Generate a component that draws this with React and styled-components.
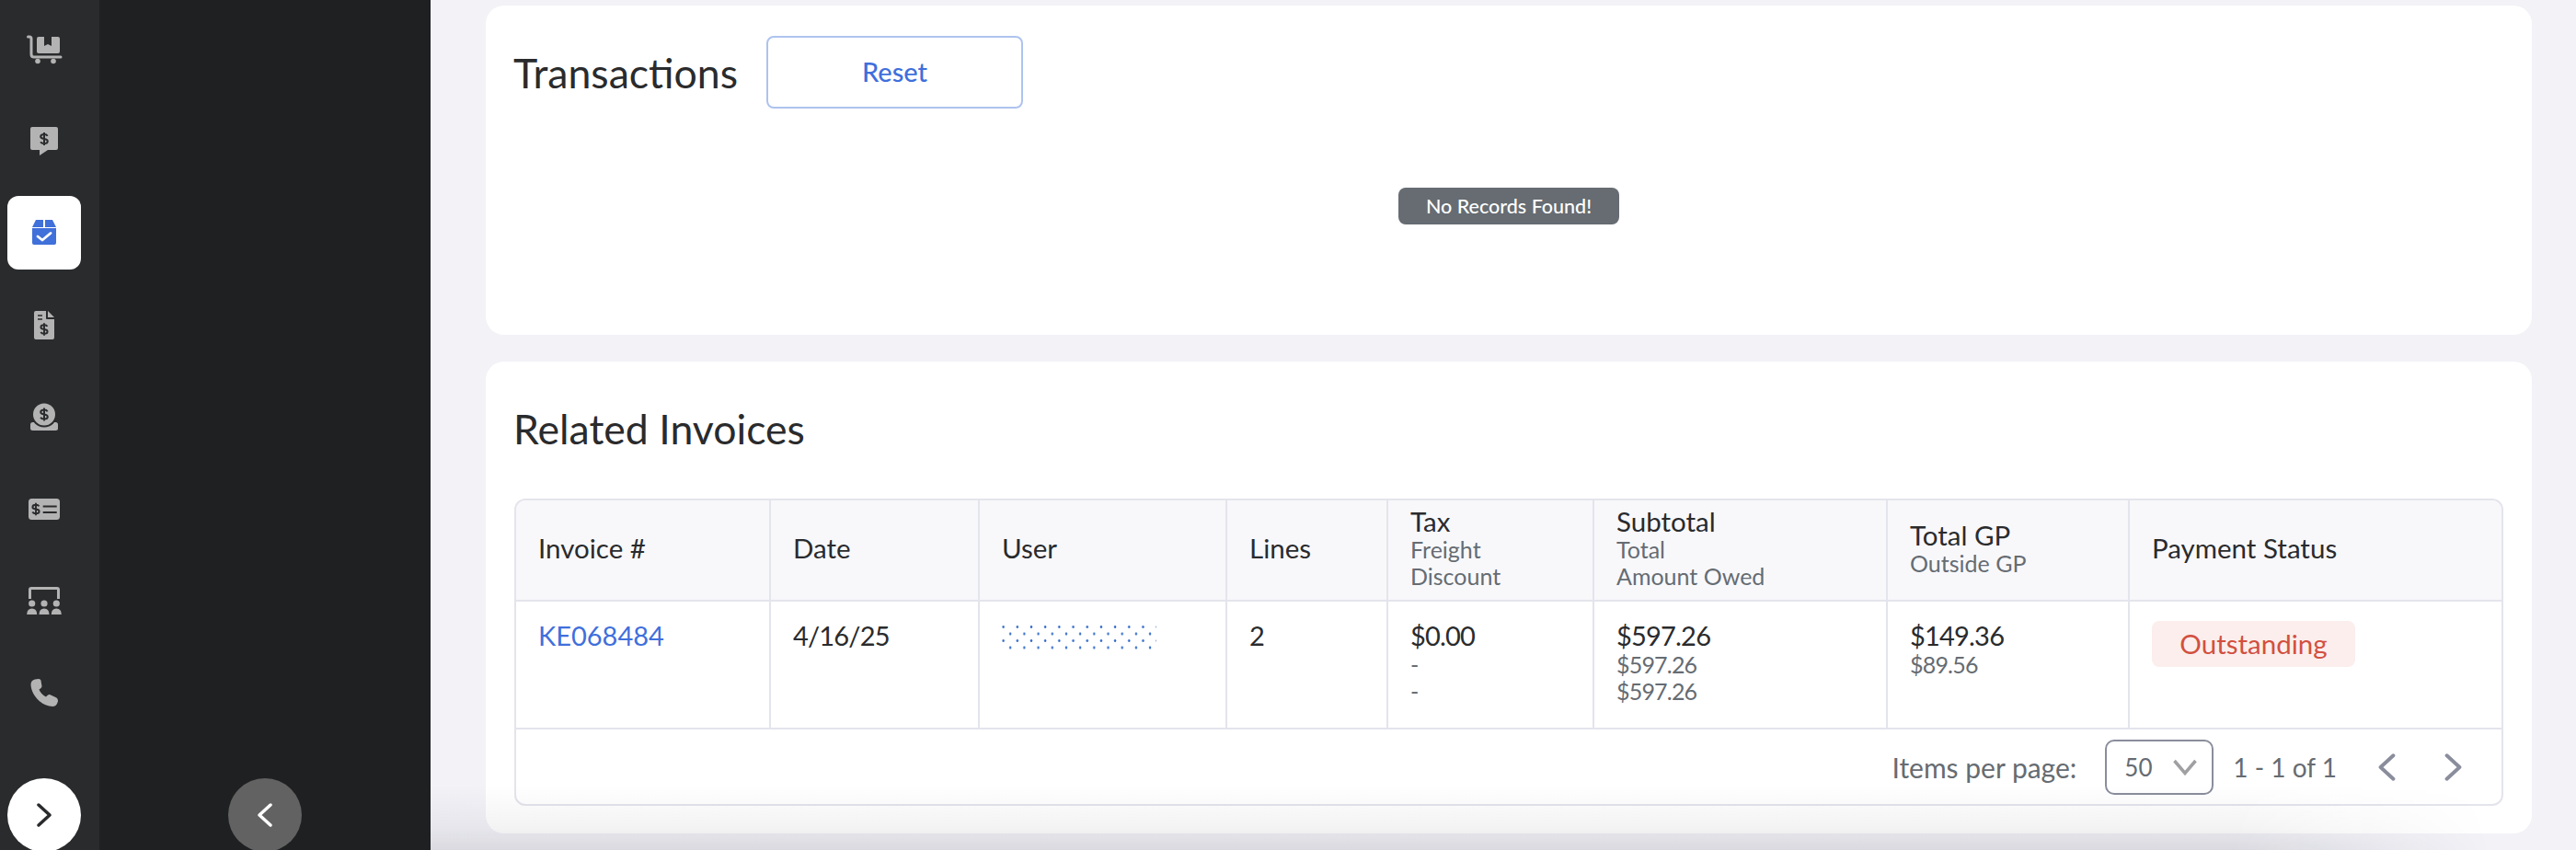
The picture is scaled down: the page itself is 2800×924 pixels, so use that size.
import React from 'react'
import styled, { createGlobalStyle } from 'styled-components'

const GlobalStyle = createGlobalStyle`
  html, body {
    margin: 0;
    height: 100%;
    overflow: hidden;
    background: #f2f2f7;
  }
  * {
    box-sizing: border-box;
  }
  body {
    font-family: 'Lato', 'Noto Sans', sans-serif;
    color: #2a2b2d;
  }
`

const GREY = '#b3b3b3'
const DARK = '#2a2b2d'

const Dollar = ({ x, y, s = 1, color = DARK }) => (
  <g transform={`translate(${x} ${y}) scale(${s})`} fill="none" stroke={color} strokeWidth="2">
    <path d="M3.6 -3.2C3 -4.5 1.8 -5 0 -5C-2.2 -5 -3.8 -4 -3.8 -2.4C-3.8 -0.8 -2.4 -0.3 0 0C2.4 0.3 3.8 0.9 3.8 2.5C3.8 4.1 2.2 5 0 5C-1.8 5 -3.2 4.4 -3.9 3.2M0 -7V7" />
  </g>
)

const Svg40 = ({ children }) => (
  <svg width="40" height="40" viewBox="0 0 40 40" fill={GREY}>
    {children}
  </svg>
)

const CartIcon = () => (
  <Svg40>
    <path d="M2.5 7H4Q6 7 6 9V26Q6 29 9 29H38" fill="none" stroke={GREY} strokeWidth="3" strokeLinecap="round" />
    <circle cx="13" cy="33.5" r="2.8" />
    <circle cx="30" cy="33.5" r="2.8" />
    <path d="M14 7H20V17L24 15L28 17V7H35Q37 7 37 9V23Q37 25 35 25H14Q12 25 12 23V9Q12 7 14 7Z" />
  </Svg40>
)

const QuoteIcon = () => (
  <Svg40>
    <path d="M7 5H33Q35 5 35 7V28Q35 30 33 30H24L15 36V30H7Q5 30 5 28V7Q5 5 7 5Z" />
    <Dollar x={20} y={18} />
  </Svg40>
)

const OrderIcon = () => (
  <svg width="40" height="40" viewBox="0 0 40 40" fill="#4070d9">
    <path d="M11 6H19V14H7Z" />
    <path d="M21 6H29L33 14H21Z" />
    <path d="M7 15H33V31Q33 33 31 33H9Q7 33 7 31Z" />
    <path d="M13 24L18 28L27 20.5" fill="none" stroke="#fff" strokeWidth="2.8" strokeLinecap="round" strokeLinejoin="round" />
  </svg>
)

const InvoiceIcon = () => (
  <Svg40>
    <path d="M11 5H22V13Q22 14 23 14H31V34Q31 36 29 36H11Q9 36 9 34V7Q9 5 11 5Z" />
    <path d="M24 5L31 12H24Z" />
    <path d="M13 10H18M13 14H18" stroke={DARK} strokeWidth="1.6" />
    <Dollar x={20} y={25} s={0.95} />
  </Svg40>
)

const CoinIcon = () => (
  <Svg40>
    <rect x="5" y="26" width="30" height="9" rx="2.5" />
    <circle cx="20" cy="17.5" r="14" fill={DARK} />
    <circle cx="20" cy="17.5" r="12" />
    <Dollar x={20} y={17.5} />
  </Svg40>
)

const CardIcon = () => (
  <Svg40>
    <rect x="3" y="9" width="34" height="23" rx="3.5" />
    <Dollar x={11} y={20.5} s={0.95} />
    <path d="M18.7 17.5H33.7M18.7 24H33.7" stroke={DARK} strokeWidth="2" />
  </Svg40>
)

const ClassIcon = () => (
  <Svg40>
    <path d="M4.5 18V8Q4.5 6.5 6 6.5H34Q35.5 6.5 35.5 8V18" fill="none" stroke={GREY} strokeWidth="3" />
    {[6.7, 20, 33.3].map(cx => (
      <g key={cx}>
        <circle cx={cx} cy="23" r="3.6" />
        <path d={`M${cx - 5.5} 35Q${cx - 5.5} 28.5 ${cx} 28.5Q${cx + 5.5} 28.5 ${cx + 5.5} 35Z`} />
      </g>
    ))}
  </Svg40>
)

const PhoneIcon = () => (
  <Svg40>
    <g transform="translate(5 5)">
      <path d="M5 0.5L9 0C10.5 0 11.5 1 11.5 2L12.5 8C12.5 9.5 11 10.5 9.5 11.5C10.5 14.5 13.5 18 17 19.5C18.5 18 19.5 16.8 21 17L27.5 20C29.5 21 30 22.5 30 24C29.5 27 27.5 30 24.5 30C11 30 0.5 16 0.5 6C0.5 3 2.5 1 5 0.5Z" />
    </g>
  </Svg40>
)

const Chevron = ({ dir, color, width = 16, height = 26, stroke = 3.5 }) => (
  <svg width={width} height={height} viewBox="0 0 16 26" fill="none" stroke={color} strokeWidth={stroke} strokeLinecap="round" strokeLinejoin="round">
    <path d={dir === 'left' ? 'M14 2L2 13L14 24' : 'M2 2L14 13L2 24'} />
  </svg>
)

const navItems = [
  { icon: <CartIcon /> },
  { icon: <QuoteIcon /> },
  { icon: <OrderIcon />, active: true },
  { icon: <InvoiceIcon /> },
  { icon: <CoinIcon /> },
  { icon: <CardIcon /> },
  { icon: <ClassIcon /> },
  { icon: <PhoneIcon /> },
]

const columns = [277, 227, 269, 175, 224, 319, 263, 404]

export default function App() {
  return (
    <Page>
      <GlobalStyle />
      <Rail>
        {navItems.map((item, i) => (
          <NavCell key={i}>
            <NavButton $active={item.active}>{item.icon}</NavButton>
          </NavCell>
        ))}
        <RoundButton $light>
          <Chevron dir="right" color={DARK} />
        </RoundButton>
      </Rail>
      <Panel>
        <RoundButton>
          <Chevron dir="left" color="#fff" />
        </RoundButton>
      </Panel>
      <Main>
        <TransactionsCard>
          <CardHeader>
            <Title>Transactions</Title>
            <ResetButton>Reset</ResetButton>
          </CardHeader>
          <EmptyRow>
            <EmptyPill>No Records Found!</EmptyPill>
          </EmptyRow>
        </TransactionsCard>
        <InvoicesCard>
          <InvoicesTitle>Related Invoices</InvoicesTitle>
          <TableFrame>
            <Table>
              <colgroup>
                {columns.map((w, i) => (
                  <col key={i} style={{ width: w }} />
                ))}
              </colgroup>
              <thead>
                <tr>
                  <HeadCell>Invoice #</HeadCell>
                  <HeadCell>Date</HeadCell>
                  <HeadCell>User</HeadCell>
                  <HeadCell>Lines</HeadCell>
                  <HeadCell>
                    Tax
                    <SubLine>Freight</SubLine>
                    <SubLine>Discount</SubLine>
                  </HeadCell>
                  <HeadCell>
                    Subtotal
                    <SubLine>Total</SubLine>
                    <SubLine>Amount Owed</SubLine>
                  </HeadCell>
                  <HeadCell>
                    Total GP
                    <SubLine>Outside GP</SubLine>
                  </HeadCell>
                  <HeadCell>Payment Status</HeadCell>
                </tr>
              </thead>
              <tbody>
                <tr>
                  <BodyCell>
                    <InvoiceLink>KE068484</InvoiceLink>
                  </BodyCell>
                  <BodyCell $numeric>4/16/25</BodyCell>
                  <BodyCell>
                    <RedactedUser />
                  </BodyCell>
                  <BodyCell>2</BodyCell>
                  <BodyCell $numeric>
                    $0.00
                    <SubLine>-</SubLine>
                    <SubLine>-</SubLine>
                  </BodyCell>
                  <BodyCell $numeric>
                    $597.26
                    <SubLine>$597.26</SubLine>
                    <SubLine>$597.26</SubLine>
                  </BodyCell>
                  <BodyCell $numeric>
                    $149.36
                    <SubLine>$89.56</SubLine>
                  </BodyCell>
                  <BodyCell>
                    <StatusBadge>Outstanding</StatusBadge>
                  </BodyCell>
                </tr>
              </tbody>
            </Table>
            <Pager>
              <PagerLabel>Items per page:</PagerLabel>
              <PageSelect>
                50
                <svg width="26" height="18" viewBox="0 0 26 18" fill="none" stroke="#a0a0a3" strokeWidth="3.5">
                  <path d="M1.5 2L13 15.5L24.5 2" />
                </svg>
              </PageSelect>
              <PagerRange>1 - 1 of 1</PagerRange>
              <PagerArrows>
                <Chevron dir="left" color="#8a8d9c" width={19} height={30} stroke={3.4} />
                <Chevron dir="right" color="#8a8d9c" width={19} height={30} stroke={3.4} />
              </PagerArrows>
            </Pager>
          </TableFrame>
        </InvoicesCard>
      </Main>
      <BottomFade />
    </Page>
  )
}

const Page = styled.div`
  display: flex;
  height: 924px;
  overflow: hidden;
  position: relative;
`

const Rail = styled.nav`
  width: 108px;
  flex: none;
  display: flex;
  flex-direction: column;
  align-items: flex-start;
  padding: 3px 0 0 8px;
  background: #2a2b2d;
`

const NavCell = styled.div`
  height: 100px;
  flex: none;
  display: flex;
  align-items: center;
  justify-content: center;
`

const NavButton = styled.div`
  width: 80px;
  height: 80px;
  display: flex;
  align-items: center;
  justify-content: center;
  border-radius: 12px;
  background: ${p => (p.$active ? '#fff' : 'transparent')};
`

const RoundButton = styled.button`
  width: 80px;
  height: 80px;
  flex: none;
  display: flex;
  align-items: center;
  justify-content: center;
  margin-top: auto;
  margin-bottom: -2px;
  padding: 0;
  border: none;
  border-radius: 50%;
  background: ${p => (p.$light ? '#fff' : '#626262')};
`

const Panel = styled.div`
  width: 360px;
  flex: none;
  display: flex;
  flex-direction: column;
  align-items: center;
  background: #1f2022;
`

const Main = styled.main`
  flex: 1;
  display: flex;
  flex-direction: column;
  gap: 29px;
  padding: 6px 48px 0 60px;
  background: #f2f2f7;
`

const Card = styled.section`
  background: #fff;
  border-radius: 20px;
  padding-left: 30px;
  padding-right: 30px;
`

const TransactionsCard = styled(Card)`
  height: 358px;
  padding-top: 33px;
`

const CardHeader = styled.div`
  display: flex;
  align-items: center;
  gap: 31px;
`

const Title = styled.h2`
  margin: 0;
  font-size: 44.6px;
  line-height: 46px;
  font-weight: 400;
  color: #2a2b2d;
`

const ResetButton = styled.button`
  width: 279px;
  height: 79px;
  padding-bottom: 3px;
  font-family: inherit;
  font-size: 29px;
  font-weight: 500;
  color: #3f6fdc;
  background: #fff;
  border: 2.5px solid #aec3ee;
  border-radius: 8px;
`

const EmptyRow = styled.div`
  display: flex;
  justify-content: center;
  margin-top: 86px;
`

const EmptyPill = styled.div`
  width: 240px;
  height: 40px;
  display: flex;
  align-items: center;
  justify-content: center;
  font-size: 21.5px;
  font-weight: 500;
  color: #fff;
  background: #666c72;
  border-radius: 8px;
`

const InvoicesCard = styled(Card)`
  height: 513px;
  padding-top: 50px;
`

const InvoicesTitle = styled(Title)`
  margin-bottom: 53px;
`

const TableFrame = styled.div`
  width: 2162px;
  height: 334px;
  margin-left: 1px;
  border: 2px solid #e4e4ec;
  border-radius: 12px;
  overflow: hidden;
`

const Table = styled.table`
  width: 100%;
  table-layout: fixed;
  border-collapse: separate;
  border-spacing: 0;
`

const HeadCell = styled.th`
  height: 110px;
  padding: 0 0 4px 24px;
  text-align: left;
  vertical-align: middle;
  font-size: 29.5px;
  line-height: 32px;
  font-weight: 400;
  background: #f8f8fb;
  border-right: 2px solid #e4e4ec;
  border-bottom: 2px solid #e4e4ec;

  &:last-child {
    border-right: none;
  }
`

const BodyCell = styled.td`
  height: 139px;
  padding: 20px 0 0 24px;
  text-align: left;
  vertical-align: top;
  font-size: 29px;
  line-height: 34px;
  letter-spacing: ${p => (p.$numeric ? '-0.8px' : '0')};
  border-right: 2px solid #e4e4ec;
  border-bottom: 2px solid #e4e4ec;

  &:last-child {
    border-right: none;
    padding-top: 21px;
  }
`

const SubLine = styled.div`
  font-size: 25px;
  line-height: 29px;
  color: #666c72;
`

const InvoiceLink = styled.a`
  color: #3f6fdc;
`

const RedactedUser = styled.div`
  width: 168px;
  height: 30px;
  margin-top: 5px;
  background-image:
    radial-gradient(circle, #2f68c8 1px, transparent 1.6px),
    radial-gradient(circle, #2f68c8 1px, transparent 1.6px);
  background-size: 15.2px 15px;
  background-position: -6px -5px, 1.6px 2.5px;
`

const StatusBadge = styled.span`
  display: inline-flex;
  align-items: center;
  justify-content: center;
  width: 221px;
  height: 50px;
  font-size: 29.5px;
  color: #d2503f;
  background: #fbeeed;
  border-radius: 8px;
`

const Pager = styled.div`
  height: 81px;
  display: flex;
  align-items: center;
  justify-content: flex-end;
  padding-right: 43px;
  font-size: 28px;
  color: #666c72;
`

const PagerLabel = styled.span`
  margin-right: 31px;
  font-size: 30px;
`

const PageSelect = styled.div`
  width: 118px;
  height: 60px;
  display: flex;
  align-items: center;
  justify-content: space-between;
  padding: 0 16px 0 19px;
  font-size: 26px;
  border: 2px solid #8a8d9c;
  border-radius: 10px;
`

const PagerRange = styled.span`
  margin-left: 21px;
`

const PagerArrows = styled.div`
  display: flex;
  gap: 53px;
  margin-left: 45px;
`

const BottomFade = styled.div`
  position: absolute;
  left: 468px;
  right: 0;
  bottom: 0;
  height: 70px;
  pointer-events: none;
  background: linear-gradient(to bottom, rgba(20, 20, 40, 0), rgba(20, 20, 40, 0.05) 66%, rgba(20, 20, 40, 0.11));
  mask-image: linear-gradient(to right, #000 84%, transparent 96%);
`
